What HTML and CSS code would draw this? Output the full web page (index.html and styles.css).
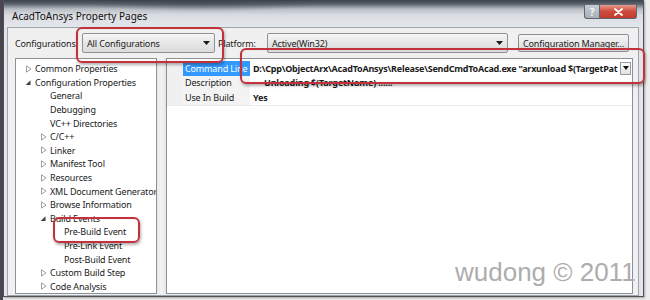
FILE: index.html
```html
<!DOCTYPE html>
<html lang="en">
<head>
  <meta charset="UTF-8" />
  <title>AcadToAnsys Property Pages</title>
  <link rel="stylesheet" href="styles.css">
</head>
<body>

  <div class="window">
    <div class="titlebar">
      <span class="title">AcadToAnsys Property Pages</span>
      <div class="caption-btns">
        <span class="cap-btn cap-help">?</span>
        <span class="cap-btn cap-close">
          <svg width="9" height="8" viewBox="0 0 9 8" aria-hidden="true">
            <path d="M1 1l7 6M8 1L1 7" stroke="#fff" stroke-width="1.8" stroke-linecap="round"/>
          </svg>
        </span>
      </div>
    </div>

    <div class="client">
      <!-- configuration / platform -->
      <div class="config-row">
        <span class="lbl lbl-config">Configurations:</span>
        <div class="combo combo-config">
          <span>All Configurations</span>
          <svg class="arrow" width="7" height="4" viewBox="0 0 7 4"><path d="M0 0h7L3.5 4z" fill="#1a1a1a"/></svg>
        </div>
        <span class="lbl lbl-platform">Platform:</span>
        <div class="combo combo-platform">
          <span>Active(Win32)</span>
          <svg class="arrow" width="7" height="4" viewBox="0 0 7 4"><path d="M0 0h7L3.5 4z" fill="#1a1a1a"/></svg>
        </div>
        <button type="button" class="btn">Configuration Manager...</button>
      </div>

      <div class="panes">
        <!-- tree -->
        <ul class="tree">
          <li class="lv0"><span class="tw tw-closed"></span>Common Properties</li>
          <li class="lv0"><span class="tw tw-open"></span>Configuration Properties</li>
          <li class="lv1"><span class="tw"></span>General</li>
          <li class="lv1"><span class="tw"></span>Debugging</li>
          <li class="lv1"><span class="tw"></span>VC++ Directories</li>
          <li class="lv1"><span class="tw tw-closed"></span>C/C++</li>
          <li class="lv1"><span class="tw tw-closed"></span>Linker</li>
          <li class="lv1"><span class="tw tw-closed"></span>Manifest Tool</li>
          <li class="lv1"><span class="tw tw-closed"></span>Resources</li>
          <li class="lv1"><span class="tw tw-closed"></span>XML Document Generator</li>
          <li class="lv1"><span class="tw tw-closed"></span>Browse Information</li>
          <li class="lv1"><span class="tw tw-open"></span>Build Events</li>
          <li class="lv2"><span class="tw"></span>Pre-Build Event</li>
          <li class="lv2"><span class="tw"></span>Pre-Link Event</li>
          <li class="lv2"><span class="tw"></span>Post-Build Event</li>
          <li class="lv1"><span class="tw tw-closed"></span>Custom Build Step</li>
          <li class="lv1"><span class="tw tw-closed"></span>Code Analysis</li>
        </ul>

        <div class="splitter"></div>

        <!-- property grid -->
        <div class="grid">
          <div class="prop is-selected">
            <span class="pname">Command Line</span>
            <span class="pval pval-edit">
              <span class="pval-text">D:\Cpp\ObjectArx\AcadToAnsys\Release\SendCmdToAcad.exe "arxunload $(TargetPat</span>
              <span class="dd"><svg width="6" height="4" viewBox="0 0 6 4"><path d="M0 0h6L3 4z" fill="#111"/></svg></span>
            </span>
          </div>
          <div class="prop">
            <span class="pname">Description</span>
            <span class="pval pval-indent">Unloading $(TargetName) ......</span>
          </div>
          <div class="prop prop-last">
            <span class="pname">Use In Build</span>
            <span class="pval">Yes</span>
          </div>
        </div>
      </div>
    </div>

    <!-- annotations -->
    <div class="mark mark-config"></div>
    <div class="mark mark-command"></div>
    <div class="mark mark-prebuild"></div>
    <div class="watermark">wudong © 2011</div>
  </div>

</body>
</html>
```

FILE: styles.css
```css
* { box-sizing: border-box; }
html, body { margin: 0; }
body {
  width: 650px; height: 300px; overflow: hidden;
  background: linear-gradient(to right, #4b4552 0, #4b4552 3px, #ededed 3px);
  font-family: "Noto Sans", "DejaVu Sans", sans-serif;
  font-size: 9px; letter-spacing: -0.15px; color: #1b1b1b;
}

/* ===== WINDOW ===== */
.window {
  position: relative;
  margin-left: 3px;
  width: 641px; height: 297px;
  border: 1px solid #4e5257; border-top: none;
  background: #e1e4e8;
  display: flex; flex-direction: column;
  padding: 0 4px 3px 3px;
  box-shadow: 1px 1px 2px rgba(0,0,0,0.3);
}
.titlebar {
  height: 27px; flex: none;
  margin: 0 -4px 0 -3px; padding: 0 6px 0 8px;
  display: flex; align-items: flex-start; justify-content: space-between;
  background:
    radial-gradient(ellipse 120px 10px at 200px 2px, rgba(60,66,74,0.55), rgba(60,66,74,0)),
    linear-gradient(to bottom, #3a424c 0, #59626c 4px, #b9bec5 9px, #d9dce1 15px, #e3e6ea 27px);
}
.title { margin-top: 9px; font-size: 10px; letter-spacing: 0; color: #111; }
.caption-btns { display: flex; margin-top: 5px; }
.cap-btn {
  height: 14px; display: flex; align-items: center; justify-content: center;
  border: 1px solid #5d6570; border-top: none;
  font-size: 10px; font-weight: 700;
}
.cap-help {
  width: 16px; color: #f4f6f8; border-radius: 0 0 0 3px;
  background: linear-gradient(#c7ccd3, #a9b0b9);
}
.cap-close {
  width: 37px; border-left: none; border-radius: 0 0 3px 0;
  background: linear-gradient(#e79a8c, #cc4a3c 50%, #c43c30);
}

.client {
  flex: 1;
  background: #f0f0f0;
  border: 1px solid #9ea4ab;
  padding: 5px 5px 0 7px;
  display: flex; flex-direction: column;
}

/* ===== CONFIG ROW ===== */
.config-row { display: flex; align-items: center; height: 20px; flex: none; }
.lbl { flex: none; white-space: nowrap; }
.lbl-config { width: 67px; }
.lbl-platform { width: 49px; margin-left: 3px; }
.combo {
  height: 20px; flex: none;
  display: flex; align-items: center; justify-content: space-between;
  padding: 0 4px 0 4px;
  border: 1px solid #8e9298; border-radius: 2px;
  background: linear-gradient(#f6f6f6, #e6e6e6 50%, #dcdcdc);
}
.combo-config { width: 133px; }
.combo-platform { width: 241px; }
.btn {
  flex: none; align-self: flex-start;
  margin-left: 10px; margin-top: 1px;
  width: 111px; height: 18px; padding: 0;
  font: inherit; letter-spacing: inherit; color: #1b1b1b; white-space: nowrap;
  border: 1px solid #8a8e94; border-radius: 2px;
  background: linear-gradient(#f5f5f5, #e8e8e8 50%, #d9d9d9);
}

/* ===== PANES ===== */
.panes { flex: 1; display: flex; margin-top: 5px; margin-bottom: 1px; }

.tree {
  width: 142px; flex: none;
  list-style: none; margin: 0; padding: 3px 0 0 0;
  background: #fff; border: 1px solid #8c9097;
  overflow: hidden;
}
.tree li { display: flex; align-items: center; height: 13.6px; white-space: nowrap; }
.tree .lv0 { padding-left: 8px; }
.tree .lv1 { padding-left: 23px; }
.tree .lv2 { padding-left: 37px; }
.tw { width: 11px; height: 8px; flex: none; }
.tw-closed { background: url("data:image/svg+xml;utf8,<svg xmlns='http://www.w3.org/2000/svg' width='6' height='8'><path d='M0.5 0.8L5 4L0.5 7.2z' fill='white' stroke='%23a0a0a0' stroke-width='1'/></svg>") no-repeat 2px 0; }
.tw-open { background: url("data:image/svg+xml;utf8,<svg xmlns='http://www.w3.org/2000/svg' width='6' height='8'><path d='M5.5 2.2V7H0.7z' fill='%23404040'/></svg>") no-repeat 1px 0; }

.splitter {
  width: 9px; flex: none;
  background: linear-gradient(to right, #e9e9e9, #f3f3f3 50%, #e6e6e6);
}

.grid {
  flex: 1; min-width: 0;
  background: #fff; border: 1px solid #8c9097;
  padding-top: 2px;
}
.prop {
  display: grid; grid-template-columns: 16px 67px 1fr;
  height: 14.5px; align-items: stretch;
}
.prop::before { content: ""; background: #f0f0f0; }
.prop-last { border-bottom: 1px solid #ececec; height: 15.5px; }
.pname {
  background: #f3f3f3; padding-left: 2px;
  display: flex; align-items: center; white-space: nowrap; overflow: hidden;
}
.is-selected .pname { background: #3399ff; color: #fff; }
.pval {
  display: flex; align-items: center; min-width: 0;
  padding-left: 3px; font-weight: 700; white-space: nowrap;
}
.pval-indent { padding-left: 14px; }
.pval-edit { padding-right: 1px; }
.pval-text { flex: 1; min-width: 0; letter-spacing: -0.22px; }
.dd {
  width: 11px; height: 13px; flex: none;
  display: flex; align-items: center; justify-content: center;
  border: 1px solid #9a9a9a; background: linear-gradient(#fafafa, #e2e2e2);
}

/* ===== ANNOTATIONS ===== */
.mark {
  position: absolute;
  border: 2.5px solid #c3323b; border-radius: 6px;
  box-shadow: 1px 2px 3px rgba(0,0,0,0.3), inset 0 0 1px rgba(0,0,0,0.2);
  pointer-events: none;
}
.mark-config { left: 72px; top: 27px; width: 148px; height: 36px; }
.mark-command { left: 236px; top: 48px; width: 405px; height: 36px; }
.mark-prebuild { left: 49px; top: 217px; width: 87px; height: 26px; }

.watermark {
  position: absolute; left: 451px; top: 257px;
  font-family: "Liberation Sans", Arial, sans-serif;
  font-size: 26px; letter-spacing: 0; color: #adadad;
  text-shadow: 0 0 1px rgba(255,255,255,0.8);
  white-space: nowrap;
}
```
